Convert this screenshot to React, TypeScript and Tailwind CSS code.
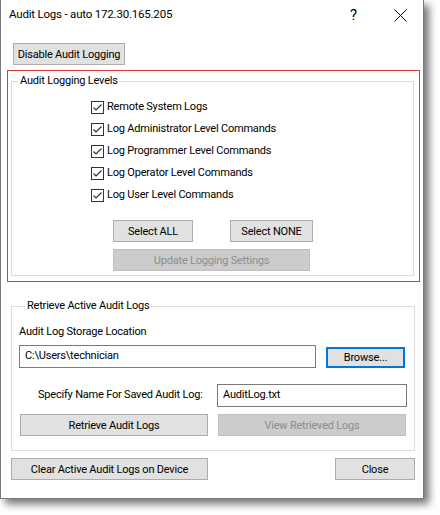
import React from 'react';

const font = { fontFamily: 'Roboto, "Segoe UI", sans-serif', letterSpacing: '-0.2px' };

function Btn({ label, className, disabled, focused }: { label: string; className: string; disabled?: boolean; focused?: boolean }) {
  const look = disabled
    ? 'bg-[#cccccc] border border-[#bfbfbf] text-[#8d8d8d]'
    : focused
      ? 'bg-[#e1e1e1] border-2 border-[#0078d7] text-black'
      : 'bg-[#e1e1e1] border border-[#adadad] text-black';
  return (
    <button
      type="button"
      className={`${look} ${className} flex items-center justify-center whitespace-nowrap text-[11px] leading-none`}
    >
      {label}
    </button>
  );
}

function Check({ label }: { label: string }) {
  return (
    <label className="flex h-[22px] items-center">
      <span className="flex h-[13px] w-[13px] items-center justify-center border border-[#333333] bg-white">
        <svg width="11" height="11" viewBox="0 0 11 11">
          <path d="M1.5 5.5 L4 8 L9.5 2.5" fill="none" stroke="#333333" strokeWidth="1.2" />
        </svg>
      </span>
      <span className="ml-[3px] whitespace-nowrap text-[11px] text-black">{label}</span>
    </label>
  );
}

export default function App() {
  const levels = [
    'Remote System Logs',
    'Log Administrator Level Commands',
    'Log Programmer Level Commands',
    'Log Operator Level Commands',
    'Log User Level Commands',
  ];

  return (
    <div className="h-[515px] w-[440px] overflow-hidden bg-white" style={font}>
      <div className="flex h-[499px] w-[424px] flex-col border-x border-b border-[#7a7a7a] bg-white shadow-[5px_5px_8px_rgba(0,0,0,0.55)]">
        {/* title bar */}
        <div className="flex h-[30px] items-center pl-[8px] text-[11.5px] text-black">
          <span className="whitespace-nowrap">Audit Logs - auto 172.30.165.205</span>
          <span className="ml-auto mr-[37px] text-[15px] leading-none">?</span>
          <svg className="mr-[16px]" width="13" height="13" viewBox="0 0 13 13">
            <path d="M0.5 0.5 L12.5 12.5 M12.5 0.5 L0.5 12.5" stroke="#000" strokeWidth="1" />
          </svg>
        </div>

        <Btn label="Disable Audit Logging" className="ml-[12px] mt-[13px] h-[22px] w-[112px]" />

        {/* levels, outlined in red */}
        <div className="ml-[6px] mt-[5px] w-[413px] border border-[#e23a3a] pb-[5px] pl-[3px] pt-[2px]">
          <fieldset className="w-[403px] border border-[#dcdcdc] pb-[4px]">
            <legend className="ml-[6px] px-[2px] text-[11px] leading-[16px] text-black">Audit Logging Levels</legend>
            <div className="flex flex-col pl-[79px] pt-[7px]">
              {levels.map((l) => (
                <Check key={l} label={l} />
              ))}
            </div>
            <div className="ml-[101px] mt-[14px] flex gap-[37px]">
              <Btn label="Select ALL" className="h-[22px] w-[80px]" />
              <Btn label="Select NONE" className="h-[22px] w-[83px]" />
            </div>
            <Btn label="Update Logging Settings" disabled className="ml-[101px] mt-[7px] h-[22px] w-[197px]" />
          </fieldset>
        </div>

        {/* retrieve */}
        <fieldset className="ml-[10px] mt-[16px] w-[404px] border border-[#dcdcdc] pb-[14px] pl-[7px]">
          <legend className="ml-[6px] px-[2px] text-[11px] leading-[16px] text-black">Retrieve Active Audit Logs</legend>
          <div className="pt-[10px] text-[11px] leading-[16px] text-black">Audit Log Storage Location</div>
          <div className="mt-[5px] flex items-end">
            <div className="flex h-[23px] w-[297px] items-center border border-[#7a7a7a] bg-white pl-[5px] text-[11px] text-black">
              C:\Users\technician
            </div>
            <Btn label="Browse..." focused className="ml-[10px] h-[21px] w-[79px]" />
          </div>
          <div className="mt-[16px] flex items-center">
            <span className="ml-[19px] w-[179px] whitespace-nowrap text-[11px] text-black">Specify Name For Saved Audit Log:</span>
            <div className="flex h-[23px] w-[190px] items-center border border-[#7a7a7a] bg-white pl-[5px] text-[11px] text-black">
              AuditLog.txt
            </div>
          </div>
          <div className="ml-[1px] mt-[7px] flex gap-[10px]">
            <Btn label="Retrieve Audit Logs" className="h-[22px] w-[188px]" />
            <Btn label="View Retrieved Logs" disabled className="h-[22px] w-[188px]" />
          </div>
        </fieldset>

        <div className="ml-[10px] mt-[7px] flex w-[404px] justify-between">
          <Btn label="Clear Active Audit Logs on Device" className="h-[22px] w-[197px]" />
          <Btn label="Close" className="h-[22px] w-[80px]" />
        </div>
      </div>
    </div>
  );
}
